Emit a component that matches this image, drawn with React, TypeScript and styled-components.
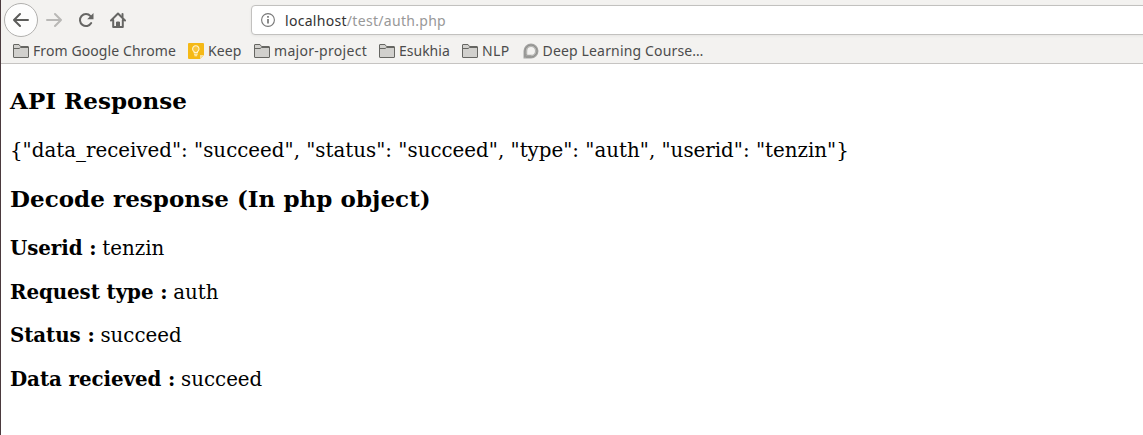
import React from "react";
import styled, { createGlobalStyle } from "styled-components";

const GlobalStyle = createGlobalStyle`
  html, body { margin: 0; background: #fff; overflow: hidden; }
  * { box-sizing: border-box; }
`;

const Window = styled.div`
  height: 435px;
  overflow: hidden;
  display: flex;
  flex-direction: column;
  border-left: 1px solid #4b3a3e;
  background: #fff;
`;

const Chrome = styled.header`
  flex: none;
  height: 64px;
  background: #f3f2f0;
  border-bottom: 1px solid #c6c4c2;
  font-family: "Noto Sans", "Open Sans", sans-serif;
`;

const NavBar = styled.div`
  display: flex;
  height: 39px;
  padding: 3px 0 0 3px;
`;

const BackButton = styled.button`
  width: 34px;
  height: 34px;
  padding: 0;
  border: 1px solid #b1b0ae;
  border-radius: 50%;
  background: #fdfdfd;
  display: flex;
  align-items: center;
  justify-content: center;
`;

const ToolButton = styled.button<{ $width: number }>`
  width: ${(p) => p.$width}px;
  height: 34px;
  padding: 0;
  border: 0;
  background: none;
  display: flex;
  align-items: center;
  justify-content: center;
`;

const AddressBar = styled.div`
  flex: 1;
  height: 30px;
  margin: 2px -4px 0 117px;
  padding-left: 9px;
  display: flex;
  align-items: center;
  gap: 10px;
  border: 1px solid #c2c1bf;
  border-radius: 4px;
  background: #fff;
  box-shadow: 0 1px 3px rgba(0, 0, 0, 0.06);
`;

const Url = styled.span`
  padding-top: 1px;
  font-size: 14px;
  line-height: 20px;
  letter-spacing: 0.3px;
  white-space: nowrap;
  color: #989898;
`;

const Host = styled.span`
  color: #333;
`;

const Bookmarks = styled.nav`
  display: flex;
  height: 24px;
  padding-left: 12px;
  align-items: center;
`;

const Bookmark = styled.span<{ $width: number; $spacing: number }>`
  flex: none;
  width: ${(p) => p.$width}px;
  display: flex;
  align-items: center;
  gap: 4px;
  font-size: 14px;
  line-height: 20px;
  letter-spacing: ${(p) => p.$spacing}px;
  white-space: nowrap;
  color: #4c4c4c;

  svg { flex: none; }
`;

const Page = styled.main`
  padding: 0.5px 9px 0;
  font-family: "DejaVu Serif", serif;
  font-size: 19.83px;
  line-height: 23.6px;
  color: #000;
`;

const Heading = styled.h3`
  margin: 22.7px 0 23.9px;
  font-size: 23px;
  line-height: 28px;
  font-weight: bold;
  letter-spacing: 0.05px;
`;

const Line = styled.p`
  margin: 20px 0;
`;

const FieldName = styled.b`
  letter-spacing: -0.08px;
  margin-right: -0.6px;
`;

const FolderIcon = () => (
  <svg width="16" height="16" viewBox="0 0 16 16" fill="#d1d0cd" stroke="#666662">
    <path d="M.5 14V2q0-.5.5-.5h5L7.5 3.5H15q.5 0 .5.5v10q0 .5-.5.5H1q-.5 0-.5-.5Z" />
    <path d="M.5 5.5h5.7l1.3-1H15" fill="none" />
  </svg>
);

const KeepIcon = () => (
  <svg width="16" height="16" viewBox="0 0 16 16">
    <path d="M1 0h14q1 0 1 1v11l-4 4H1q-1 0-1-1V1q0-1 1-1Z" fill="#f5b916" />
    <path d="M12 16v-4h4Z" fill="#fbe09a" />
    <path d="M6.2 9.6V8.7a3.2 3.2 0 1 1 3.2 0v.9Z" fill="#f8c540" stroke="#fff4d0" strokeWidth="1.1" />
    <path d="M6 11.2h3.6M6.4 12.7h2.8" stroke="#fff4d0" strokeWidth="1.1" />
  </svg>
);

const CourseIcon = () => (
  <svg width="16" height="16" viewBox="0 0 16 16" fill="none">
    <path d="M.5 15.5V8A7.5 7.5 0 1 1 8 15.5Z" fill="#a5a5a3" />
    <path d="M4.2 11.8V8A3.9 3.9 0 1 1 8 11.8Z" fill="#f3f2f0" />
    <path d="M2 14V8a6 6 0 1 1 6 6H3" stroke="#858583" strokeWidth=".8" />
    <path d="M3.3 11V8A4.8 4.8 0 1 1 8 12.8" stroke="#c7c7c5" strokeWidth=".6" />
  </svg>
);

const Arrow = ({ color, flip }: { color: string; flip?: boolean }) => (
  <svg width="16" height="16" viewBox="0 0 16 16" fill="none" stroke={color} strokeWidth="2" strokeLinecap="round" strokeLinejoin="round">
    <path d={flip ? "M1 8h14M9 2l6 6-6 6" : "M15 8H1M7 2 1 8l6 6"} />
  </svg>
);

const ReloadIcon = () => (
  <svg width="16" height="16" viewBox="0 0 16 16" fill="none">
    <path d="M13.2 11A6 6 0 1 1 12.5 4.1L14 5.6" stroke="#666664" strokeWidth="2" strokeLinecap="round" />
    <path d="M15.5 1v6.2H9.2Z" fill="#666664" />
  </svg>
);

const HomeIcon = () => (
  <svg width="16" height="16" viewBox="0 0 16 16" fill="none" stroke="#666664" strokeWidth="2" strokeLinecap="round" strokeLinejoin="round">
    <path d="M1 8.5 8 1.5l7 7M3.2 8v7h9.6V8" />
    <path d="M6.5 14v-4h3v4Z" strokeWidth="1" fill="#666664" />
    <path d="M12.5 2v3" />
  </svg>
);

const InfoIcon = () => (
  <svg width="14" height="14" viewBox="0 0 14 14" fill="none" stroke="#777">
    <circle cx="7" cy="7" r="6.4" strokeWidth="1.1" />
    <path d="M7 6v4.5M7 3v1.8" strokeWidth="1.7" />
  </svg>
);

const bookmarks = [
  { label: "From Google Chrome", width: 175, spacing: 0.09, Icon: FolderIcon },
  { label: "Keep", width: 66, spacing: 0.1, Icon: KeepIcon },
  { label: "major-project", width: 125, spacing: 0.3, Icon: FolderIcon },
  { label: "Esukhia", width: 83, spacing: 0, Icon: FolderIcon },
  { label: "NLP", width: 60.5, spacing: 0.4, Icon: FolderIcon },
  { label: "Deep Learning Course…", width: 190, spacing: 0.16, Icon: CourseIcon },
];

const fields = [
  ["Userid", "tenzin"],
  ["Request type", "auth"],
  ["Status", "succeed"],
  ["Data recieved", "succeed"],
];

export default function App() {
  return (
    <Window>
      <GlobalStyle />
      <Chrome>
        <NavBar>
          <BackButton aria-label="Back"><Arrow color="#5c5c5a" /></BackButton>
          <ToolButton $width={32} aria-label="Forward"><Arrow color="#b9b8b6" flip /></ToolButton>
          <ToolButton $width={32} aria-label="Reload"><ReloadIcon /></ToolButton>
          <ToolButton $width={32} aria-label="Home"><HomeIcon /></ToolButton>
          <AddressBar>
            <InfoIcon />
            <Url><Host>localhost</Host>/test/auth.php</Url>
          </AddressBar>
        </NavBar>
        <Bookmarks>
          {bookmarks.map(({ label, width, spacing, Icon }) => (
            <Bookmark key={label} $width={width} $spacing={spacing}>
              <Icon />
              <span>{label}</span>
            </Bookmark>
          ))}
        </Bookmarks>
      </Chrome>
      <Page>
        <Heading>API Response</Heading>
        <Line>{'{"data_received": "succeed", "status": "succeed", "type": "auth", "userid": "tenzin"}'}</Line>
        <Heading>Decode response (In php object)</Heading>
        {fields.map(([name, value]) => (
          <Line key={name}><FieldName>{name} :</FieldName> {value}</Line>
        ))}
      </Page>
    </Window>
  );
}
